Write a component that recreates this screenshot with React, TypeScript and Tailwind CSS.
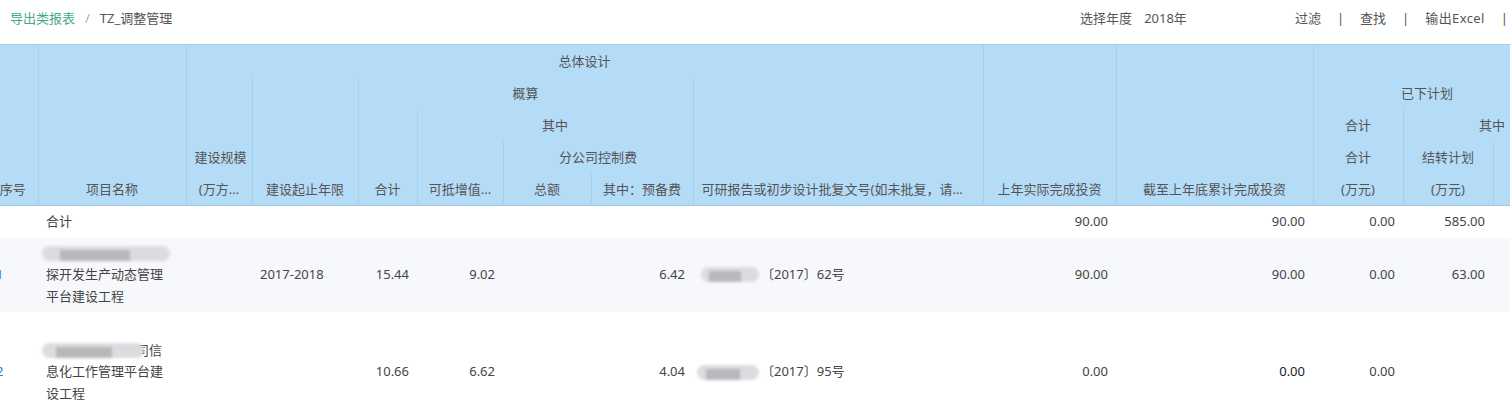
import React from "react";

const font = { fontFamily: '"Noto Sans", "Noto Sans CJK SC", sans-serif' };

const widths = [50, 148, 66, 106, 59, 86, 88, 102, 290, 133, 197, 90, 90, 48];

function Blur({ w, className = "" }: { w: string; className?: string }) {
  return (
    <span
      className={`relative inline-block h-[15px] ${w} rounded-full bg-[#dcdce0] blur-[1.5px] align-middle ${className}`}
    >
      <span className="ml-[14%] mt-[2px] inline-block h-[11px] w-[55%] bg-[#b8b8bc]" />
    </span>
  );
}

const th = "border-r border-[#a6d0ee] px-2 align-bottom font-normal text-[#555] whitespace-nowrap overflow-hidden";
const td = "px-2 align-middle whitespace-nowrap";

export default function App() {
  return (
    <div className="w-[1510px] h-[406px] overflow-hidden bg-white text-[13px]" style={font}>
      <div className="flex h-11 items-start pt-[9px] leading-[18px] text-[#555]">
        <div className="flex items-center pl-[10px]">
          <span className="text-[#3fa98e]">导出类报表</span>
          <span className="mx-[10px] text-[#aaa]">/</span>
          <span>TZ_调整管理</span>
        </div>
        <div className="ml-auto flex items-center pr-[2px]">
          <span>选择年度</span>
          <span className="ml-[12px] mr-[108px]">2018年</span>
          <div className="flex items-center gap-4">
            <span>过滤</span>
            <span>|</span>
            <span>查找</span>
            <span>|</span>
            <span className="tracking-[0.4px]">输出Excel</span>
            <span>|</span>
          </div>
        </div>
      </div>

      <div className="overflow-hidden">
        <table className="-ml-[12px] table-fixed border-collapse" style={{ width: widths.reduce((a, b) => a + b, 0) }}>
          <colgroup>
            {widths.map((w, i) => (
              <col key={i} style={{ width: w }} />
            ))}
          </colgroup>
          <thead className="bg-[#b4dcf7] leading-8 border-t border-[#a6d0ee] border-b border-b-[#9cc8e8]">
            <tr className="h-8">
              <th rowSpan={5} className={th + " text-center"}>序号</th>
              <th rowSpan={5} className={th + " text-center"}>项目名称</th>
              <th colSpan={7} className={th + " text-center align-middle"}>总体设计</th>
              <th rowSpan={5} className={th + " text-center"}>上年实际完成投资</th>
              <th rowSpan={5} className={th + " text-center"}>截至上年底累计完成投资</th>
              <th colSpan={3} className={th} />
            </tr>
            <tr className="h-8">
              <th rowSpan={4} className={th + " text-center"}>
                建设规模
                <br />
                (万方...
              </th>
              <th rowSpan={4} className={th + " text-center"}>建设起止年限</th>
              <th colSpan={4} className={th + " text-center align-middle"}>概算</th>
              <th rowSpan={4} className={th + " text-left"}>可研报告或初步设计批复文号(如未批复，请...</th>
              <th colSpan={3} className={th + " text-center align-middle"}>已下计划</th>
            </tr>
            <tr className="h-8">
              <th rowSpan={3} className={th + " text-center"}>合计</th>
              <th colSpan={3} className={th + " text-center align-middle"}>其中</th>
              <th className={th + " text-center align-middle"}>合计</th>
              <th colSpan={2} className={th + " text-center align-middle pl-[48px]"}>其中</th>
            </tr>
            <tr className="h-8">
              <th rowSpan={2} className={th + " text-center"}>可抵增值...</th>
              <th colSpan={2} className={th + " text-center align-middle"}>分公司控制费</th>
              <th rowSpan={2} className={th + " text-center"}>
                合计
                <br />
                (万元)
              </th>
              <th rowSpan={2} className={th + " text-center"}>
                结转计划
                <br />
                (万元)
              </th>
              <th rowSpan={2} className={th} />
            </tr>
            <tr className="h-8">
              <th className={th + " text-center"}>总额</th>
              <th className={th + " text-center"}>其中：预备费</th>
            </tr>
          </thead>
          <tbody className="leading-[21.5px] text-[#444]">
            <tr className="h-8 bg-white">
              <td className={td} />
              <td className={td}>合计</td>
              <td className={td} />
              <td className={td} />
              <td className={td} />
              <td className={td} />
              <td className={td} />
              <td className={td} />
              <td className={td} />
              <td className={td + " text-right"}>90.00</td>
              <td className={td + " text-right"}>90.00</td>
              <td className={td + " text-right"}>0.00</td>
              <td className={td + " text-right"}>585.00</td>
              <td className={td} />
            </tr>
            <tr className="bg-[#f7f8fb]">
              <td className={td + " text-[#2a7fc4]"}>1</td>
              <td className={td + " py-[5px]"}>
                <div className="flex h-[21.5px] items-center">
                  <Blur w="w-[128px]" className="-ml-[4px]" />
                </div>
                <div>探开发生产动态管理</div>
                <div>平台建设工程</div>
              </td>
              <td className={td} />
              <td className={td}>2017-2018</td>
              <td className={td + " text-right"}>15.44</td>
              <td className={td + " text-right"}>9.02</td>
              <td className={td} />
              <td className={td + " text-right"}>6.42</td>
              <td className={td}>
                <div className="flex items-center">
                  <Blur w="w-[58px]" />
                  <span className="ml-[2px]">〔2017〕62号</span>
                </div>
              </td>
              <td className={td + " text-right"}>90.00</td>
              <td className={td + " text-right"}>90.00</td>
              <td className={td + " text-right"}>0.00</td>
              <td className={td + " text-right"}>63.00</td>
              <td className={td} />
            </tr>
            <tr className="h-[120px] bg-white">
              <td className={td + " text-[#2a7fc4]"}>2</td>
              <td className={td}>
                <div className="flex h-[21.5px] items-center">
                  <span className="order-2 -ml-[8px]">司信</span>
                  <Blur w="w-[102px]" className="order-1 z-10 -ml-[4px]" />
                </div>
                <div>息化工作管理平台建</div>
                <div>设工程</div>
              </td>
              <td className={td} />
              <td className={td} />
              <td className={td + " text-right"}>10.66</td>
              <td className={td + " text-right"}>6.62</td>
              <td className={td} />
              <td className={td + " text-right"}>4.04</td>
              <td className={td}>
                <div className="flex items-center">
                  <Blur w="w-[62px]" className="-ml-[4px]" />
                  <span className="ml-[2px]">〔2017〕95号</span>
                </div>
              </td>
              <td className={td + " text-right"}>0.00</td>
              <td className={td + " text-right text-[#222]"}>0.00</td>
              <td className={td + " text-right"}>0.00</td>
              <td className={td} />
              <td className={td} />
            </tr>
          </tbody>
        </table>
      </div>
    </div>
  );
}
